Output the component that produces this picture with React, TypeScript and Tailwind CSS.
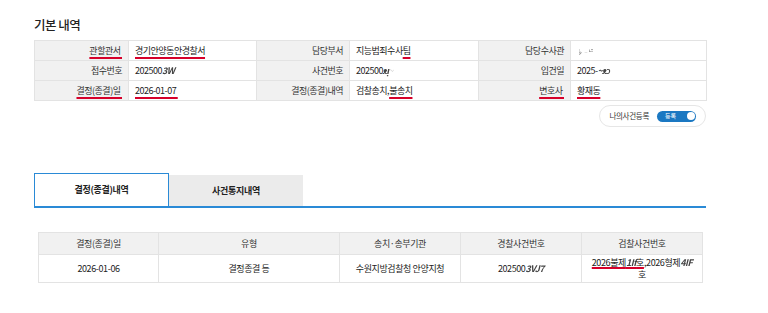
import React from 'react';

const FONT = { fontFamily: '"Noto Sans CJK KR", "Noto Sans", sans-serif' };

// 가려진 값 (번호 일부 마스킹)
const Masked = ({ text }: { text: string }) => (
  <span className="text-[#444] font-bold italic blur-[0.5px] tracking-[-0.5px]">{text}</span>
);

const Mark = ({ children, tight }: { children: React.ReactNode; tight?: boolean }) => (
  <span
    className={
      tight
        ? 'underline decoration-[#d6002a] decoration-[1.5px] underline-offset-[1px]'
        : 'underline decoration-[#d6002a] decoration-[1.5px] underline-offset-[3px]'
    }
  >
    {children}
  </span>
);

const INFO: { label: React.ReactNode; value: React.ReactNode }[][] = [
  [
    { label: <Mark>관할관서&nbsp;</Mark>, value: <Mark>경기안양동안경찰서</Mark> },
    { label: '담당부서', value: <>지능범죄수사<Mark>팀</Mark></> },
    { label: '담당수사관', value: <span className="text-[6px] text-[#666] blur-[0.4px]">♭ ᆢᄂᄒ</span> },
  ],
  [
    { label: '접수번호', value: <>202500<Masked text="3W" /></> },
    { label: '사건번호', value: <>202500<Masked text="ᴥᴉ" /><span className="text-[#ccc] blur-[0.6px]">~</span></> },
    { label: '입건일', value: <>2025-<Masked text="~ᴥᴐ" /></> },
  ],
  [
    { label: <Mark>결정(종결)일&nbsp;</Mark>, value: <Mark>2026-01-07&nbsp;</Mark> },
    { label: '결정(종결)내역', value: <>검찰송치,<Mark>불송치</Mark></> },
    { label: <Mark>변호사&nbsp;</Mark>, value: <Mark>황재동</Mark> },
  ],
];

const COLS = ['w-[94px]', 'w-[128px]', 'w-[93px]', 'w-[129px]', 'w-[92px]', 'w-[136px]'];

export default function App() {
  return (
    <div className="w-[768px] h-[313px] bg-white text-[#222]" style={FONT}>
      <div className="pl-[34px] pr-[62px] pt-[17px]">
        <h2 className="text-[12.5px] font-medium text-[#222] leading-[16px] tracking-[-0.5px]">기본 내역</h2>

        {/* 기본 내역 표 */}
        <table className="mt-[7px] w-[672px] table-fixed border-collapse text-[9px] tracking-[-0.5px]">
          <colgroup>
            {COLS.map((c, i) => (
              <col key={i} className={c} />
            ))}
          </colgroup>
          <tbody>
            {INFO.map((row, r) => (
              <tr key={r} className="h-[20px]">
                {row.map((cell, c) => (
                  <React.Fragment key={c}>
                    <td className="border border-[#e3e3e3] bg-[#f1f1f1] text-right pr-[6px] text-[#333]">{cell.label}</td>
                    <td className="border border-[#e3e3e3] pl-[6px] text-[#222]">{cell.value}</td>
                  </React.Fragment>
                ))}
              </tr>
            ))}
          </tbody>
        </table>

        {/* 나의사건등록 */}
        <div className="flex justify-end mt-[4px]">
          <div className="flex items-center gap-[8px] h-[22px] px-[9px] rounded-full border border-[#e6e6e6]">
            <span className="text-[7.5px] text-[#333] tracking-[-0.3px]">나의사건등록</span>
            <div className="flex items-center justify-between w-[39px] h-[11px] rounded-full bg-[#1b78c2] pl-[8px] pr-[1.5px]">
              <span className="text-[6px] text-white leading-none">등록</span>
              <span className="w-[8px] h-[8px] rounded-full bg-white" />
            </div>
          </div>
        </div>

        {/* 탭 */}
        <div className="mt-[46px] flex w-[672px] border-b-2 border-[#2a8ad6]">
          <div className="w-[135px] h-[33px] -mb-[2px] flex items-center justify-center bg-white border-[1.5px] border-b-0 border-[#2a8ad6] text-[9px] font-bold text-[#222] tracking-[-0.3px]">
            결정(종결)내역
          </div>
          <div className="w-[134px] h-[31px] mt-[2px] flex items-center justify-center bg-[#ebebeb] text-[9px] font-bold text-[#222] tracking-[-0.3px]">
            사건통지내역
          </div>
        </div>

        {/* 결정(종결)내역 표 */}
        <table className="ml-[4px] mt-[24px] w-[664px] table-fixed border-collapse text-[9px] text-center tracking-[-0.4px]">
          <colgroup>
            <col className="w-[120px]" />
            <col className="w-[181px]" />
            <col className="w-[121px]" />
            <col className="w-[121px]" />
            <col className="w-[121px]" />
          </colgroup>
          <thead>
            <tr className="h-[22px] bg-[#f1f1f1] text-[#333]">
              <th className="font-normal border border-[#e3e3e3]">결정(종결)일</th>
              <th className="font-normal border border-[#e3e3e3]">유형</th>
              <th className="font-normal border border-[#e3e3e3]">송치·송부기관</th>
              <th className="font-normal border border-[#e3e3e3]">경찰사건번호</th>
              <th className="font-normal border border-[#e3e3e3]">검찰사건번호</th>
            </tr>
          </thead>
          <tbody>
            <tr className="h-[28px] text-[#222]">
              <td className="border border-[#e3e3e3]">2026-01-06</td>
              <td className="border border-[#e3e3e3]">결정종결 등</td>
              <td className="border border-[#e3e3e3]">수원지방검찰청 안양지청</td>
              <td className="border border-[#e3e3e3]">202500<Masked text="3VJ7" /></td>
              <td className="border border-[#e3e3e3] leading-[12px] px-0">
                <span className="whitespace-nowrap">
                  <Mark tight>2026불제<Masked text="1If" />호</Mark>,2026형제<Masked text="4IF" />
                </span>
                <br />호
              </td>
            </tr>
          </tbody>
        </table>
      </div>
    </div>
  );
}
